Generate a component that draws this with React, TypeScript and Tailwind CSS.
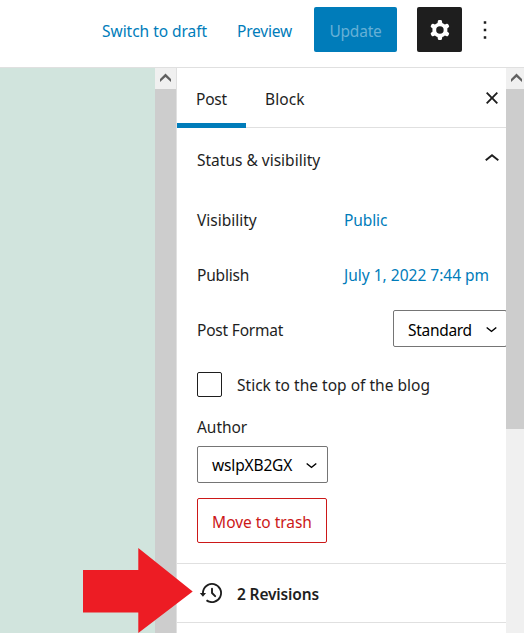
import type { ReactNode } from 'react';

const paths = {
  cog: 'M10.289 4.836A1 1 0 0111.275 4h1.306a1 1 0 01.987.836l.244 1.466c.787.26 1.503.679 2.108 1.218l1.393-.522a1 1 0 011.216.437l.653 1.13a1 1 0 01-.23 1.273l-1.148.944a6.025 6.025 0 010 2.435l1.149.946a1 1 0 01.23 1.272l-.653 1.13a1 1 0 01-1.216.437l-1.394-.522c-.605.54-1.32.958-2.108 1.218l-.244 1.466a1 1 0 01-.987.836h-1.306a1 1 0 01-.986-.836l-.244-1.466a5.995 5.995 0 01-2.108-1.218l-1.394.522a1 1 0 01-1.217-.436l-.653-1.131a1 1 0 01.23-1.272l1.149-.946a6.026 6.026 0 010-2.435l-1.148-.944a1 1 0 01-.23-1.272l.653-1.131a1 1 0 011.217-.437l1.393.522a5.994 5.994 0 012.108-1.218l.244-1.466zM14.929 12a3 3 0 11-6 0 3 3 0 016 0z',
  more: 'M13 19h-2v-2h2v2zm0-6h-2v-2h2v2zm0-6h-2V5h2v2z',
  close: 'M12 13.06l3.712 3.713 1.061-1.06L13.061 12l3.712-3.712-1.06-1.06L12 10.938 8.288 7.227l-1.061 1.06L10.939 12l-3.712 3.712 1.06 1.061L12 13.061z',
  up: 'M6.5 12.4L12 8l5.5 4.4-.9 1.2L12 10l-4.5 3.6-1-1.2z',
  down: 'M17.5 11.6L12 16l-5.5-4.4.9-1.2L12 14l4.5-3.6 1 1.2z',
  history: 'M5.5 12h1.75l-2.5 3-2.5-3H4a8 8 0 113.134 6.35l.907-1.194A6.5 6.5 0 105.5 12zm9.53 1.97l-2.28-2.28V8.5a.75.75 0 00-1.5 0V12a.747.747 0 00.218.529l1.282-.84-1.28.842 2.5 2.5a.75.75 0 101.06-1.061z',
};

function Icon({ name, className = 'size-[30px]' }: { name: keyof typeof paths; className?: string }) {
  return (
    <svg viewBox="0 0 24 24" fill="currentColor" fillRule="evenodd" className={`shrink-0 ${className}`}>
      <path d={paths[name]} />
    </svg>
  );
}

function ScrollUp() {
  return (
    <div className="h-[21px] shrink-0 bg-[#f0f0f0] pl-[5px] pt-[5px]">
      <svg viewBox="0 0 11 10" className="h-[10px] w-[11px]" fill="#606060">
        <path d="M0 6L5.5.5 11 6v3L5.5 4 0 9z" />
      </svg>
    </div>
  );
}

function Row({ label, labelClass = '', children }: { label: string; labelClass?: string; children: ReactNode }) {
  return (
    <div className="flex h-[55px] items-center">
      <span className={`w-[147px] shrink-0 ${labelClass}`}>{label}</span>
      {children}
    </div>
  );
}

export default function App() {
  return (
    <div className="flex h-[633px] w-[524px] flex-col overflow-hidden bg-white font-['Noto_Sans',sans-serif] text-[15.5px] leading-5 tracking-[-0.2px] whitespace-nowrap text-[#1e1e1e]">
      <header className="flex h-[68px] shrink-0 items-start border-b border-[#e0e0e0] pl-[102px] pt-[7px]">
        <a className="mt-[14px] w-[135px] tracking-[-0.03px] text-[#007cba]">Switch to draft</a>
        <a className="mt-[14px] w-[77px] text-[#007cba]">Preview</a>
        <button className="mr-5 h-[45px] w-[83px] rounded-[2px] bg-[#007cba] pt-[3px] text-[#66b0d6]">Update</button>
        <button className="mr-2 flex size-[45px] items-center justify-center rounded-[2px] bg-[#1e1e1e] text-white">
          <Icon name="cog" />
        </button>
        <Icon name="more" className="mt-2 size-[30px]" />
      </header>

      <div className="relative flex min-h-0 flex-1">
        <main className="w-[155px] shrink-0 bg-[#d1e4dd]" />
        <div className="flex w-[21px] shrink-0 flex-col bg-[#cdcdcd]">
          <ScrollUp />
        </div>

        <aside className="w-[330px] shrink-0 overflow-hidden border-l border-[#e0e0e0]">
          <nav className="flex h-[60px] border-b border-[#e0e0e0]">
            <span className="h-[60px] w-[69px] shrink-0 border-b-5 border-[#007cba] pl-[19px] pt-[21px]">Post</span>
            <span className="w-[231px] shrink-0 pl-[19px] pt-[21px] tracking-[0.1px]">Block</span>
            <Icon name="close" className="mt-[15px] size-[30px]" />
          </nav>

          <section className="h-[436px] border-b border-[#e0e0e0] pl-5">
            <div className="flex h-[64px] items-start justify-between pt-4">
              <span className="mt-[6px] tracking-normal">Status &amp; visibility</span>
              <Icon name="up" className="-mr-px size-[30px]" />
            </div>
            <Row label="Visibility" labelClass="tracking-normal">
              <a className="tracking-[-0.1px] text-[#007cba]">Public</a>
            </Row>
            <Row label="Publish">
              <a className="tracking-normal text-[#007cba]">July 1, 2022 7:44 pm</a>
            </Row>
            <Row label="Post Format">
              <div className="mb-[2px] ml-[49px] flex h-[37px] w-[114px] shrink-0 items-center rounded-[2px] border border-[#757575] pl-[14px] text-black">
                <span className="w-[72px] pt-[2px] tracking-[-0.3px]">Standard</span>
                <Icon name="down" className="size-[23px]" />
              </div>
            </Row>
            <label className="mt-[15px] flex h-[25px] items-center">
              <span className="mr-[15px] size-[25px] rounded-[2px] border border-[#1e1e1e]" />
              <span className="pt-px tracking-[0.02px]">Stick to the top of the blog</span>
            </label>
            <div className="mt-5 tracking-[-0.05px]">Author</div>
            <div className="mt-[9px] flex h-[37px] w-[131px] items-center rounded-[2px] border border-[#757575] pl-[14px] text-black">
              <span className="w-[88px] pt-px tracking-[-0.15px]">wslpXB2GX</span>
              <Icon name="down" className="size-[23px]" />
            </div>
            <button className="mt-[15px] h-[45px] w-[130px] rounded-[2px] border border-[#cc1818] pt-[3px] tracking-[-0.03px] text-[#cc1818]">Move to trash</button>
          </section>

          <section className="flex h-[59px] items-center border-b border-[#e0e0e0] pl-5">
            <Icon name="history" />
            <span className="ml-[10px] pt-[2px] font-semibold tracking-[-0.15px]">2 Revisions</span>
          </section>
        </aside>

        <div className="flex w-[18px] shrink-0 flex-col overflow-hidden bg-[#f0f0f0]">
          <ScrollUp />
          <div className="h-[340px] bg-[#cdcdcd]" />
        </div>

        <svg viewBox="0 0 110 85" className="absolute bottom-0 left-[83px] h-[85px] w-[110px]" fill="#ed1c24">
          <path d="M0 22h55.3V0l54.4 43.5L55.3 85V64.5H0z" />
        </svg>
      </div>
    </div>
  );
}
